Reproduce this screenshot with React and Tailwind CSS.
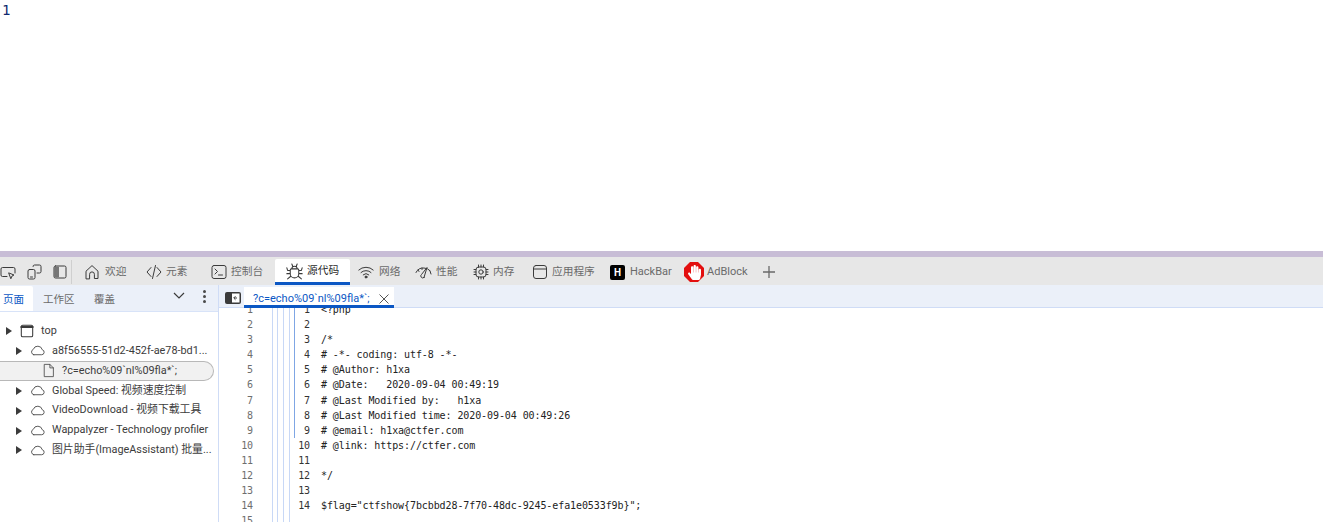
import React from "react";
import { FaHandPaper } from "react-icons/fa";

const ui = "font-['Roboto','Noto_Sans_CJK_SC',sans-serif]";
const S = ({ children, className = "w-4 h-4" }) => (
  <svg viewBox="0 0 16 16" fill="none" stroke="#3b3b3b" strokeWidth="1" strokeLinecap="round" strokeLinejoin="round" className={"shrink-0 " + className}>{children}</svg>
);

const Inspect = () => <S><path d="M7 12.5H2.5a1.5 1.5 0 0 1-1.5-1.5V5a1.5 1.5 0 0 1 1.5-1.5h11A1.5 1.5 0 0 1 15 5v4" /><path d="M9 9l5 2-2 1-1 2.4z" /></S>;
const Device = () => <S><path d="M7 2.5a1.5 1.5 0 0 1 1.5-1.5h5A1.5 1.5 0 0 1 15 2.5v5A1.5 1.5 0 0 1 13.5 9H11" /><rect x="2" y="5.5" width="7" height="9.5" rx="1.5" /><path d="M4.5 13h2" /></S>;
const Dock = () => <S><rect x="2" y="2" width="12" height="12" rx="1.5" /><path d="M3 3h3.5v10H3z" fill="#777" stroke="#777" /></S>;
const Home = () => <S><path d="M2 14.5V7.2L8 1.6l6 5.6v7.3h-3.6v-4.2a2.4 2.4 0 0 0-4.8 0v4.2z" /></S>;
const Code = () => <S><path d="M5 3.5L1 8l4 4.5M11 3.5L15 8l-4 4.5M9.5 1.5l-3 13" /></S>;
const Console = () => <S><rect x="1" y="1.5" width="14" height="13" rx="2" /><path d="M4 5l2.5 2.5L4 10M7.5 11h4" /></S>;
const Bug = () => <S className="w-[17px] h-[17px]"><path d="M5 5.5h6a1 1 0 0 1 1 1V10a4 4 0 0 1-8 0V6.500a1 1 0 0 1 1-1zM5.500 5.500a2.500 2.500 0 0 1 5 0M5.500 1l1 2.500M10.500 1l-1 2.500M4 7H1.500L.8 4.500M12 7h2.500l.7-2.500M4 10H.8M12 10h3.200M4.500 12.500L1.500 15M11.500 12.500l3 2.500" /></S>;
const Wifi = () => <S><path d="M.8 6a10.500 10.500 0 0 1 14.400 0M3 8.500a7.300 7.300 0 0 1 10 0M5.200 10.800a4.100 4.100 0 0 1 5.600 0" /><circle cx="8" cy="13" r="1" fill="#3b3b3b" /></S>;
const Perf = () => <S className="w-[18px] h-4"><path d="M1 8.500A8 8 0 0 1 9 4a8 8 0 0 1 6 2.700M15 7l1 3M3 6l1 1.500M7 4v1.500M9 13.500L12 3.500 6.500 10.500a1.800 1.800 0 0 0 2.500 3z" /></S>;
const Memory = () => <S><rect x="3" y="3" width="10" height="10" rx="2.500" /><circle cx="8" cy="8" r="2.200" /><path d="M5.500 1v2M8 1v2M10.500 1v2M5.500 13v2M8 13v2M10.500 13v2M1 5.500h2M1 8h2M1 10.500h2M13 5.500h2M13 8h2M13 10.500h2" /></S>;
const AppI = () => <S><rect x="1.500" y="1.500" width="13" height="13" rx="2.500" /><path d="M1.500 5h13" /></S>;
const Win = () => <S className="w-[14px] h-[14px]"><rect x="1.500" y="1.500" width="13" height="13" rx="1.500" strokeWidth="1.200" /><path d="M1.500 3.500h13" strokeWidth="2.400" /></S>;
const Cloud = () => <S className="w-[15px] h-[15px]"><path d="M4 12.500h8.500a2.700 2.700 0 0 0 .6-5.300A5 5 0 0 0 3.500 6.800 3 3 0 0 0 4 12.500z" stroke="#505050" /></S>;
const FileI = () => <S className="w-[14px] h-[15px]"><path d="M3 1h6l4 4v10H3z" stroke="#505050" /><path d="M9 1v4h4" stroke="#505050" /></S>;
const Arrow = () => <span className="w-0 h-0 border-y-[4px] border-y-transparent border-l-[6px] border-l-[#3b3b3b] shrink-0" />;

const tabs = [
  ["w-[61px] pl-[10px] gap-[5px]", <Home />, "欢迎"],
  ["w-[65px] pl-[11px] gap-[4px]", <Code />, "元素"],
  ["w-[75px] pl-[11px] gap-[4px]", <Console />, "控制台"],
];
const tabs2 = [
  ["w-[58px] pl-[8px] gap-[5px]", <Wifi />, "网络"],
  ["w-[58px] pl-[6px] gap-[4px]", <Perf />, "性能"],
  ["w-[59px] pl-[7px] gap-[4px]", <Memory />, "内存"],
  ["w-[78px] pl-[7px] gap-[4px]", <AppI />, "应用程序"],
];

function Tab({ c, icon, label }) {
  return (
    <div className={"flex items-center h-[26px] text-[10.7px] text-[#6a6a6a] " + c}>
      {icon}
      <span>{label}</span>
    </div>
  );
}

const tree = [
  "a8f56555-51d2-452f-ae78-bd1...",
  null,
  "Global Speed: 视频速度控制",
  "VideoDownload - 视频下载工具",
  "Wappalyzer - Technology profiler",
  "图片助手(ImageAssistant) 批量...",
];

const code = [
  "<?php", "", "/*", "# -*- coding: utf-8 -*-", "# @Author: h1xa",
  "# @Date:   2020-09-04 00:49:19", "# @Last Modified by:   h1xa",
  "# @Last Modified time: 2020-09-04 00:49:26", "# @email: h1xa@ctfer.com",
  "# @link: https://ctfer.com", "", "*/", "", '$flag="ctfshow{7bcbbd28-7f70-48dc-9245-efa1e0533f9b}";', "",
];

function Guide({ w }) {
  return <div className={"h-full border-l border-[#c8d8f6] " + w} />;
}

export default function Page() {
  return (
    <div className={"h-[522px] w-[1323px] flex flex-col overflow-hidden bg-white " + ui}>
      <div className="h-[251px] shrink-0 pl-[2px] pt-[1px] text-[14px] leading-[18px] text-[#0f2a6e] font-['DejaVu_Sans_Mono',monospace]">1</div>
      <div className="h-[6px] shrink-0 bg-[#c8bdd6]" />
      <div className="h-[28px] shrink-0 bg-[#e7e7e7] flex items-end">
        <div className="flex items-center h-[26px] pb-[1px] w-[75px] shrink-0">
          <div className="w-[26px]"><Inspect /></div>
          <div className="w-[26px]"><Device /></div>
          <div className="w-[19px]"><Dock /></div>
          <div className="h-[24px] border-l border-[#cfcfcf]" />
        </div>
        <div className="-ml-px flex items-end">
          {tabs.map(([c, i, l]) => <Tab key={l} c={c} icon={i} label={l} />)}
          <div className="w-[75px] h-[26px] pl-[11px] pt-[2px] gap-[4px] flex items-center bg-white border-b-[3px] border-[#0b57c4] rounded-t-[2px] text-[10.7px] text-[#2a2a2a]">
            <Bug />
            <span>源代码</span>
          </div>
          {tabs2.map(([c, i, l]) => <Tab key={l} c={c} icon={i} label={l} />)}
          <div className="w-[74px] h-[26px] pl-[7px] gap-[5px] flex items-center text-[11px] text-[#6a6a6a]">
            <span className="w-[15px] h-[15px] bg-black rounded-[2px] text-white text-[10px] font-bold leading-[15px] text-center">H</span>
            <span>HackBar</span>
          </div>
          <div className="w-[78px] h-[26px] pl-[7px] gap-[3px] flex items-center text-[11px] text-[#6a6a6a]">
            <span className="w-[20px] h-[20px] bg-[#e30f0f] flex items-center justify-center [clip-path:polygon(30%_0,70%_0,100%_30%,100%_70%,70%_100%,30%_100%,0_70%,0_30%)]">
              <FaHandPaper className="w-[13px] h-[15px] text-white" />
            </span>
            <span>AdBlock</span>
          </div>
          <div className="pl-[8px] h-[26px] flex items-center">
            <svg viewBox="0 0 12 12" className="w-3 h-3" stroke="#6a6a6a" strokeWidth="1.300"><path d="M6 0v12M0 6h12" /></svg>
          </div>
        </div>
      </div>
      <div className="flex-1 flex min-h-0">
        <div className="w-[219px] shrink-0 border-r border-[#cfdcf6] flex flex-col">
          <div className="h-[27px] shrink-0 bg-[#ebf0f9] flex items-end border-b border-[#d8e3f8] text-[10.500px] text-[#6a6a6a]">
            <div className="w-[33px] h-[25px] bg-white text-[#0b57c4] pl-[3px] pt-[1px] leading-[25px] rounded-tr-[2px]">页面</div>
            <div className="w-[51px] h-[25px] pl-[10px] pt-[1px] leading-[25px]">工作区</div>
            <div className="w-[70px] h-[25px] pl-[10px] pt-[1px] leading-[25px]">覆盖</div>
            <div className="h-[25px] pt-[6px] ml-[19px]">
              <svg viewBox="0 0 12 8" className="w-3 h-2" fill="none" stroke="#3b3b3b" strokeWidth="1.200"><path d="M1 1l5 5 5-5" /></svg>
            </div>
            <div className="h-[25px] pt-[4px] pl-[18px] flex flex-col gap-[2px]">
              <span className="w-[3px] h-[3px] bg-[#4a4a4a] rounded-full" />
              <span className="w-[3px] h-[3px] bg-[#4a4a4a] rounded-full" />
              <span className="w-[3px] h-[3px] bg-[#4a4a4a] rounded-full" />
            </div>
          </div>
          <div className="pt-[9px] text-[10.850px] text-[#3c3c3c]">
            <div className="h-[20px] flex items-center pl-[6px]">
              <Arrow />
              <span className="ml-[8px]"><Win /></span>
              <span className="ml-[7px]">top</span>
            </div>
            {tree.map((t, i) =>
              t ? (
                <div key={i} className="h-[19.900px] flex items-center pl-[16px] whitespace-nowrap">
                  <Arrow />
                  <span className="ml-[8px]"><Cloud /></span>
                  <span className="ml-[7px]">{t}</span>
                </div>
              ) : (
                <div key={i} className="h-[19.900px] w-[214px] flex items-center pl-[42px] bg-[#f1f1f1] border border-l-0 border-[#b8b8b8] rounded-r-full">
                  <FileI />
                  <span className="ml-[6px] whitespace-nowrap">?c=echo%09`nl%09fla*`;</span>
                </div>
              )
            )}
          </div>
        </div>
        <div className="flex-1 flex flex-col min-w-0">
          <div className="h-[23px] shrink-0 relative z-10 bg-[#ebf0f9] border-b border-[#cfdcf6] flex items-end">
            <div className="w-[25px] h-[22px] pl-[6px] pt-[7px]">
              <svg viewBox="0 0 16 12" className="w-4 h-3"><rect width="16" height="12" rx="2" fill="#3b3b3b" /><rect x="7" y="1.500" width="7.500" height="9" fill="#fff" /><path d="M12 6H9M10.500 4.200L8.700 6l1.800 1.800" stroke="#3b3b3b" fill="none" /></svg>
            </div>
            <div className="w-[150px] h-[21px] -mb-px bg-white border-b-[3px] border-[#0b57c4] flex items-center pl-[9px] pt-[6px] text-[11px] text-[#0b57c4]">
              <span className="whitespace-nowrap w-[125px]">?c=echo%09`nl%09fla*`;</span>
              <svg viewBox="0 0 10 10" className="w-[10px] h-[10px] ml-[1px]" stroke="#555" strokeWidth="1"><path d="M.5.500l9 9M9.500.500l-9 9" /></svg>
            </div>
          </div>
          <div className="-mt-[6px] text-[10px] leading-[15.100px] tracking-[-0.09px] font-['DejaVu_Sans_Mono',monospace]">
            {code.map((l, i) => (
              <div key={i} className="h-[15.100px] flex">
                <div className="w-[34px] text-right text-[#6e6e6e]">{i + 1}</div>
                <div className="w-[19px]" />
                <Guide w="w-[5px]" />
                <Guide w="w-[6px]" />
                <Guide w="w-[6px]" />
                <Guide w="w-[5px]" />
                {i < 14 ? (
                  <div className={"w-[16px] text-right text-[#333] border-l " + (i < 9 ? "border-[#7fa6e4]" : "border-transparent")}>{i + 1}</div>
                ) : <div className="w-[16px]" />}
                <div className="pl-[11px] whitespace-pre text-[#222]">{l}</div>
              </div>
            ))}
          </div>
        </div>
      </div>
    </div>
  );
}
